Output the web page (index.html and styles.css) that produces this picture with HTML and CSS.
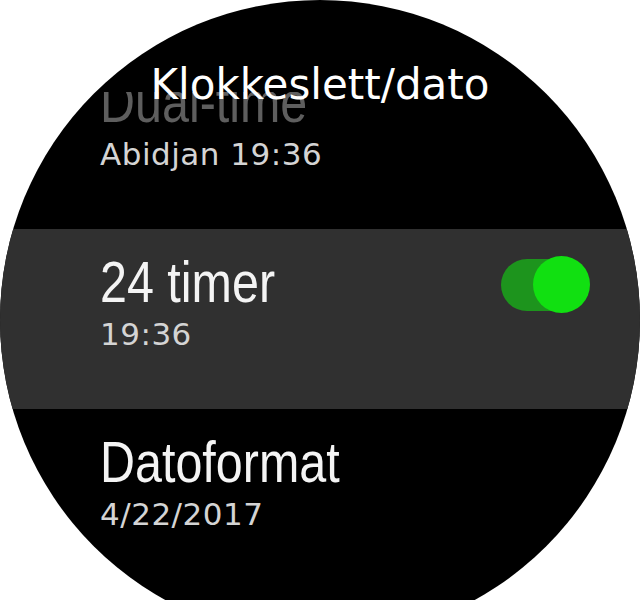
FILE: index.html
```html
<!DOCTYPE html>
<html lang="no">
<head>
    <meta charset="UTF-8">
    <meta name="viewport" content="width=device-width, initial-scale=1.0">
    <title>Klokkeslett/dato</title>
    <link rel="stylesheet" href="styles.css">
</head>
<body>

    <div class="watch">
        <h1 class="screen-title">Klokkeslett/dato</h1>

        <div class="menu">
            <div class="menu-scroll">
                <div class="item faded">
                    <div class="item-text">
                        <div class="item-name">Dual-time</div>
                        <div class="item-value">Abidjan 19:36</div>
                    </div>
                </div>

                <div class="item selected">
                    <div class="item-text">
                        <div class="item-name">24 timer</div>
                        <div class="item-value">19:36</div>
                    </div>
                    <div class="toggle on">
                        <div class="toggle-track"></div>
                        <div class="toggle-knob"></div>
                    </div>
                </div>

                <div class="item">
                    <div class="item-text">
                        <div class="item-name">Datoformat</div>
                        <div class="item-value">4/22/2017</div>
                    </div>
                </div>
            </div>
        </div>
    </div>

</body>
</html>
```

FILE: styles.css
```css
body {
    margin: 0;
    background-color: #fff;
    font-family: 'DejaVu Sans', sans-serif;
    overflow: hidden;
}

.watch {
    position: relative;
    width: 640px;
    height: 640px;
    border-radius: 50%;
    background-color: #000;
    overflow: hidden;
}

.screen-title {
    position: absolute;
    top: 60px;
    left: 0;
    right: 0;
    margin: 0;
    text-align: center;
    font-size: 42px;
    font-weight: normal;
    line-height: 50px;
    color: #fff;
    z-index: 2;
}

/* list viewport starts under the title */
.menu {
    margin-top: 92px;
    height: 548px;
    overflow: hidden;
}

.menu-scroll {
    margin-top: -43px; /* scrolled a bit down */
}

.item {
    display: flex;
    justify-content: space-between;
    align-items: flex-start;
    height: 180px;
    box-sizing: border-box;
    padding: 23px 50px 0 100px;
}

.item.selected {
    background-color: #303030;
}

/* no condensed face installed, so squeeze a regular one */
.item-name {
    font-family: 'Liberation Sans', Arial, sans-serif;
    font-size: 57px;
    line-height: 60px;
    color: #f4f4f4;
    transform: scaleX(0.85);
    transform-origin: left center;
    white-space: nowrap;
}

.item.faded .item-name {
    color: #5e5e5e;
}

.item-value {
    margin-top: 4px;
    font-size: 31px;
    line-height: 36px;
    letter-spacing: 0.5px;
    color: #d4d4d4;
}

.toggle {
    position: relative;
    width: 89px;
    height: 57px;
    margin-top: 4px;
}

.toggle-track {
    position: absolute;
    left: 0;
    top: 3px;
    width: 80px;
    height: 52px;
    border-radius: 26px;
    background-color: #1d941d;
}

.toggle-knob {
    position: absolute;
    right: 0;
    top: 0;
    width: 57px;
    height: 57px;
    border-radius: 50%;
    background-color: #11e011;
}
```
